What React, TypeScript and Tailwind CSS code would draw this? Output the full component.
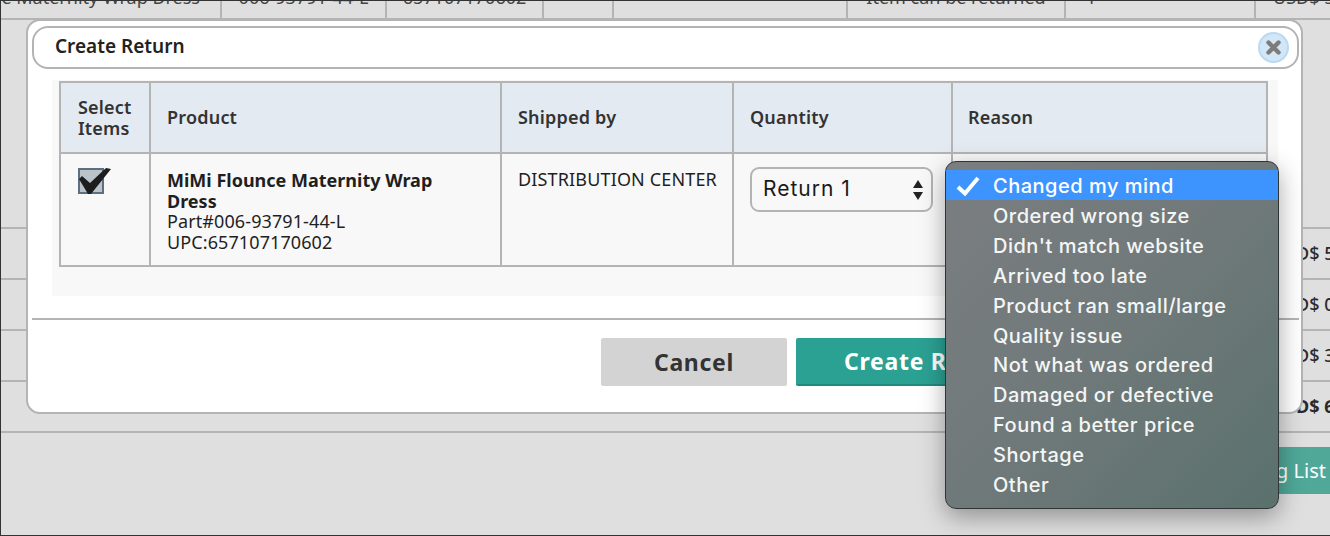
const reasons = [
  "Ordered wrong size",
  "Didn't match website",
  "Arrived too late",
  "Product ran small/large",
  "Quality issue",
  "Not what was ordered",
  "Damaged or defective",
  "Found a better price",
  "Shortage",
  "Other",
];

const topCells = [
  { w: "w-[221px]", text: "MiMi Flounce Maternity Wrap Dress", cls: "justify-end pr-5" },
  { w: "w-[165px]", text: "006-93791-44-L", cls: "justify-center" },
  { w: "w-[157px]", text: "657107170602", cls: "justify-center" },
  { w: "w-[70px]", text: "", cls: "" },
  { w: "w-[234px]", text: "", cls: "" },
  { w: "w-[218px]", text: "Item can be returned", cls: "justify-center" },
  { w: "w-[190px]", text: "1", cls: "pl-5" },
  { w: "w-[75px]", text: "USD$ 5", cls: "pl-[17px]" },
];

const sideRows = ["D$ 5", "D$ 0", "D$ 3", "D$ 6"];

const App = () => {
  return (
    <div className="relative w-[1330px] h-[536px] overflow-hidden bg-[#dfdfdf] border-t border-l border-b border-[#333] font-['Noto_Sans',sans-serif] text-[#2a2a2a]">
      {/* page behind the modal */}
      <div className="flex h-[19px] border-b-2 border-[#b4b4b4] overflow-hidden">
        {topCells.map((c, i) => (
          <div
            key={i}
            className={`${c.w} ${c.cls} shrink-0 flex items-end overflow-hidden border-r-2 border-[#b4b4b4] last:border-r-0 pb-[10px] text-[18px] leading-[22px] text-[#444] whitespace-nowrap`}
          >
            {c.text}
          </div>
        ))}
      </div>
      <div className="mt-[207px]">
        <div className="border-t-2 border-[#b4b4b4]" />
        {sideRows.map((t, i) => (
          <div
            key={t}
            className={`flex h-[51px] items-center justify-end border-b-2 border-[#b4b4b4] text-[18px] whitespace-nowrap ${i === 3 ? "font-bold" : "font-medium"}`}
          >
            <span className="w-[34px] overflow-hidden">{t}</span>
          </div>
        ))}
      </div>
      <div className="flex justify-end mt-[14px]">
        <div className="w-[120px] h-[47px] bg-[#4fa898] text-white text-[20px] flex items-center justify-end pr-[4px] whitespace-nowrap">
          Packing List
        </div>
      </div>

      {/* modal */}
      <div className="absolute left-[25px] top-[18px] w-[1277px] h-[395px] bg-white border-2 border-[#b4b4b4] rounded-[14px] px-[4px] pt-[5px]">
        <div className="relative flex items-center h-[43px] w-[1267px] border-2 border-[#b4b4b4] rounded-[16px] pl-[21px] pb-[2px] text-[19px] font-semibold text-[#222]">
          Create Return
          <div className="absolute right-[8px] top-[4px] w-[31px] h-[31px] rounded-full bg-[#d3e6f6] border-2 border-[#b8daf4] flex items-center justify-center">
            <svg width="17" height="17" viewBox="0 0 17 17">
              <path d="M3.5 3.5 L13.5 13.5 M13.5 3.5 L3.5 13.5" stroke="#7c7c7c" strokeWidth="4.4" strokeLinecap="round" />
            </svg>
          </div>
        </div>

        <div className="ml-[20px] mt-[11px] w-[1226px] h-[216px] bg-[#f8f8f8] pl-[7px] pt-[1px]">
          <table className="w-[1209px] table-fixed border-collapse text-[18px] leading-[21px]">
            <thead>
              <tr className="h-[71px] bg-[#e3eaf2] text-left text-[#333] tracking-[0.2px]">
                <th className="w-[90px] border-2 border-[#b4b4b4] pl-[17px] font-semibold">Select<br />Items</th>
                <th className="w-[351px] border-2 border-[#b4b4b4] pl-[16px] font-semibold">Product</th>
                <th className="w-[232px] border-2 border-[#b4b4b4] pl-[16px] font-semibold">Shipped by</th>
                <th className="w-[219px] border-2 border-[#b4b4b4] pl-[16px] font-semibold">Quantity</th>
                <th className="border-2 border-[#b4b4b4] pl-[15px] font-semibold">Reason</th>
              </tr>
            </thead>
            <tbody>
              <tr className="h-[113px] align-top">
                <td className="border-2 border-[#b4b4b4] pl-[17px] pt-[13px]">
                  <svg width="34" height="28" viewBox="0 0 34 28" className="block">
                    <rect x="1" y="2" width="24" height="24" fill="#b9c3c9" stroke="#5d6f7f" strokeWidth="2" />
                    <path d="M1 12 L4 9 L12 16 L28 1 L33 2 L13 27 L10 27 Z" fill="#1d1d1d" />
                  </svg>
                </td>
                <td className="border-2 border-[#b4b4b4] pl-[16px] pr-[40px] pt-[16px] text-[#1f1f1f]">
                  <div className="font-bold">MiMi Flounce Maternity Wrap Dress</div>
                  <div className="-mt-px tracking-[0.1px]">Part#006-93791-44-L</div>
                  <div className="tracking-[0.1px]">UPC:657107170602</div>
                </td>
                <td className="border-2 border-[#b4b4b4] pl-[16px] pt-[15px] text-[#1f1f1f] tracking-[0.15px] whitespace-nowrap">DISTRIBUTION CENTER</td>
                <td className="border-2 border-[#b4b4b4] pl-[16px] pt-[13px]">
                  <div className="flex items-center justify-between w-[183px] h-[45px] rounded-[9px] border-2 border-[#b4b4b4] bg-[#f8f8f8] pl-[11px] pr-[8px] font-['Inter',sans-serif] text-[21px] text-[#1a1a1a]">
                    <span className="tracking-[1px] -mt-[2px]">Return 1</span>
                    <svg width="10" height="20" viewBox="0 0 10 20">
                      <path d="M5 0 L10 8 L0 8 Z M5 20 L10 12 L0 12 Z" fill="#222" />
                    </svg>
                  </div>
                </td>
                <td className="border-2 border-[#b4b4b4]" />
              </tr>
            </tbody>
          </table>
        </div>

        <div className="mt-[22px] w-[1267px] border-t-2 border-[#b4b4b4]" />

        <div className="flex mt-[18px] ml-[569px] gap-[9px]">
          <div className="w-[186px] h-[48px] bg-[#d3d3d3] rounded-[2px] flex items-center justify-center text-[23px] tracking-[0.7px] font-bold text-[#333]">
            Cancel
          </div>
          <div className="w-[266px] h-[48px] bg-[#2ba193] rounded-[2px] border-b-2 border-[#1f8b7e] flex items-center justify-center text-[23px] tracking-[0.7px] font-bold text-white whitespace-nowrap">
            Create Return
          </div>
        </div>
      </div>

      {/* native select popup */}
      <div className="absolute left-[944px] top-[160px] w-[334px] h-[348px] pt-[8px] rounded-[11px] border border-[#2f3434] bg-linear-to-br from-[#7b7e80] via-[#70797a] to-[#5a716c] shadow-[0_8px_24px_rgba(0,0,0,0.35)] font-['Inter',sans-serif] text-[20px] font-medium text-[#f4f6f6] tracking-[0.5px]">
        <div className="relative flex items-center h-[30px] pl-[47px] pt-[2px] bg-[#3d94ff] text-white">
          <svg width="24" height="20" viewBox="0 0 24 20" className="absolute left-[10px] top-[6px]">
            <path d="M2 11 L9 17.5 L22 2" fill="none" stroke="#fff" strokeWidth="4" />
          </svg>
          Changed my mind
        </div>
        {reasons.map((r) => (
          <div key={r} className="flex items-center h-[29.9px] pl-[47px] pt-[2px] whitespace-nowrap">
            {r}
          </div>
        ))}
      </div>
    </div>
  );
};

export default App;
